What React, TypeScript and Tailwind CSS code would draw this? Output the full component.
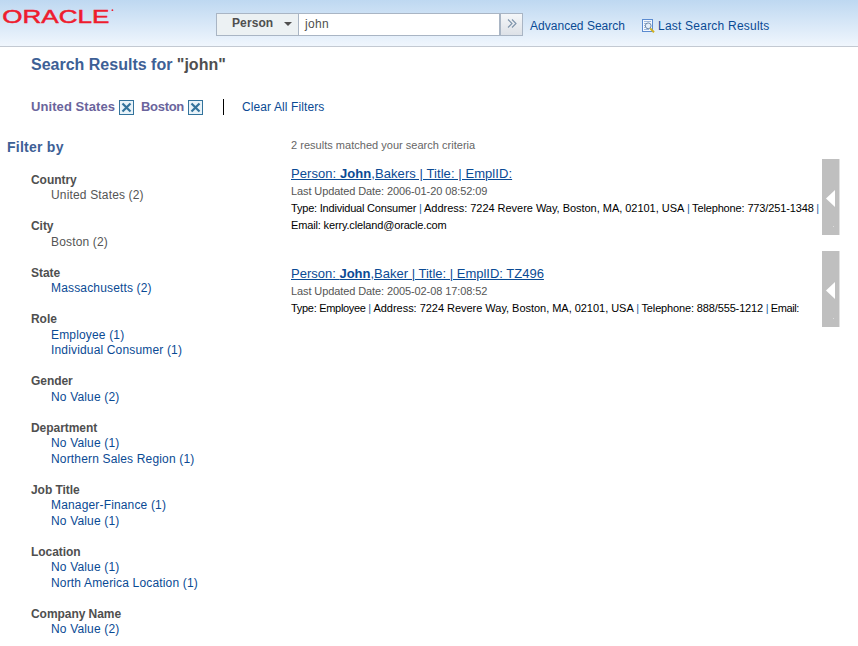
type FilterGroup = {
  name: string;
  values: string[];
  applied?: boolean;
};

type Result = {
  rest: string;
  updated: string;
  offset: string;
  titleTracking: string;
  lines: { text: string; className: string }[][];
};

const filterGroups: FilterGroup[] = [
  { name: 'Country', values: ['United States (2)'], applied: true },
  { name: 'City', values: ['Boston (2)'], applied: true },
  { name: 'State', values: ['Massachusetts (2)'] },
  { name: 'Role', values: ['Employee (1)', 'Individual Consumer (1)'] },
  { name: 'Gender', values: ['No Value (2)'] },
  { name: 'Department', values: ['No Value (1)', 'Northern Sales Region (1)'] },
  { name: 'Job Title', values: ['Manager-Finance (1)', 'No Value (1)'] },
  { name: 'Location', values: ['No Value (1)', 'North America Location (1)'] },
  { name: 'Company Name', values: ['No Value (2)'] },
];

const results: Result[] = [
  {
    rest: ',Bakers | Title: | EmplID:',
    updated: '2006-01-20 08:52:09',
    offset: 'pt-[6px]',
    titleTracking: 'tracking-[0.07px]',
    lines: [
      [
        { text: 'Type: Individual Consumer', className: 'tracking-[-0.2px]' },
        { text: 'Address: 7224 Revere Way, Boston, MA, 02101, USA', className: 'tracking-[-0.03px]' },
        { text: 'Telephone: 773/251-1348', className: 'tracking-[-0.14px]' },
        { text: '', className: '' },
      ],
      [{ text: 'Email: kerry.cleland@oracle.com', className: 'tracking-[-0.15px]' }],
    ],
  },
  {
    rest: ',Baker | Title: | EmplID: TZ496',
    updated: '2005-02-08 17:08:52',
    offset: 'pt-[14px]',
    titleTracking: '',
    lines: [
      [
        { text: 'Type: Employee', className: 'tracking-[-0.3px]' },
        { text: 'Address: 7224 Revere Way, Boston, MA, 02101, USA', className: 'tracking-[-0.03px]' },
        { text: 'Telephone: 888/555-1212', className: 'tracking-[-0.14px]' },
        { text: 'Email:', className: 'tracking-[-0.4px]' },
      ],
    ],
  },
];

function OracleLogo() {
  return (
    <svg width="116" height="20" viewBox="0 0 116 20" className="mt-[6px] ml-[2px] shrink-0" fill="#ee1c2e">
      <text x="0.3" y="16.7" fontSize="19.2" textLength="107" lengthAdjust="spacingAndGlyphs" stroke="#ee1c2e" strokeWidth="0.5">
        ORACLE
      </text>
      <circle cx="110.4" cy="4.2" r="0.9" />
    </svg>
  );
}

function LastSearchIcon() {
  return (
    <svg width="13" height="14" viewBox="0 0 13 14" className="shrink-0">
      <rect x="0.5" y="0.5" width="10" height="12" fill="#f4f8fd" stroke="#5b8bd0" />
      <path d="M2 2.5h7M2 4.5h2M2 6.5h1M2 8.5h1M2 10.5h5" stroke="#9fb9dc" />
      <circle cx="6.2" cy="6.8" r="2.9" fill="#e3eefa" stroke="#6a86a8" />
      <path d="M8.2 9.4l3.8 3.8" stroke="#d0b021" strokeWidth="2" />
    </svg>
  );
}

function RemoveIcon() {
  return (
    <svg width="15" height="15" viewBox="0 0 15 15" className="shrink-0">
      <rect x="0.5" y="0.5" width="14" height="14" fill="#e9f3f9" stroke="#33739c" />
      <path d="M3.5 3.5l8 8M11.5 3.5l-8 8" stroke="#33739c" strokeWidth="2.2" />
    </svg>
  );
}

function Header() {
  return (
    <header className="flex h-[47px] items-start border-b border-[#c3c9d2] bg-linear-to-b from-[#bed8f1] to-[#f0f6fd]">
      <div className="w-[216px]">
        <OracleLogo />
      </div>
      <div className="mt-[13px] flex h-[23px] w-[307px] border border-[#a9b5c4] bg-white">
        <button className="flex w-[82px] items-start border-r border-[#a9b5c4] bg-[#ecf1f3] pl-[15px] text-[12px] leading-[19px] font-bold text-[#4f4f4f]">
          <span className="w-[52px] text-left tracking-[0.1px]">Person</span>
          <svg width="8" height="4" viewBox="0 0 8 4" className="mt-[8px]">
            <path d="M0 0h8L4 4z" fill="#4f4f4f" />
          </svg>
        </button>
        <div className="flex-1 pl-[6px] text-[12px] leading-[20px] tracking-[0.3px] text-[#4f4f4f]">john</div>
        <button className="flex w-[23px] items-center justify-center border-l-2 border-[#a9b5c4] bg-linear-to-b from-[#f5f7f9] to-[#dde1e7]">
          <svg width="10" height="9" viewBox="0 0 10 9" fill="none" stroke="#7d93aa" strokeWidth="1.1" className="mb-[2px]">
            <path d="M1 0.5l4 4-4 4M5 0.5l4 4-4 4" />
          </svg>
        </button>
      </div>
      <nav className="mt-[18px] flex h-[16px] items-center text-[12px] text-[#0a4a94]">
        <a className="ml-[7px] w-[112px] tracking-[0.02px]">Advanced Search</a>
        <LastSearchIcon />
        <a className="ml-[3px] tracking-[0.22px]">Last Search Results</a>
      </nav>
    </header>
  );
}

function FilterPanel() {
  return (
    <aside className="w-[291px] shrink-0 pl-[7px]">
      <h2 className="text-[14px] leading-[18px] font-bold tracking-[0.25px] text-[#3d6096]">Filter by</h2>
      <div className="mt-[16.5px] ml-[24px] flex flex-col gap-[15.5px] text-[12px] leading-[15.5px]">
        {filterGroups.map((group) => (
          <section key={group.name}>
            <h3 className="font-bold tracking-[-0.05px] text-[#4f4f4f]">{group.name}</h3>
            {group.values.map((value) => (
              <div
                key={value}
                className={`pl-[20px] tracking-[0.16px] ${group.applied ? 'text-[#555555]' : 'text-[#0a4a94]'}`}
              >
                {value}
              </div>
            ))}
          </section>
        ))}
      </div>
    </aside>
  );
}

function ResultLine({ segments }: { segments: Result['lines'][number] }) {
  return (
    <p className="text-[11px] leading-[17px] whitespace-nowrap text-black">
      {segments.map((segment, i) => (
        <span key={i}>
          {i > 0 && <span className="tracking-[-0.4px] text-[#1f5f9f]"> | </span>}
          <span className={segment.className}>{segment.text}</span>
        </span>
      ))}
    </p>
  );
}

function CollapseHandle() {
  return (
    <div className="h-[76px] w-[18px] shrink-0 border-r border-[#e2e2e2] bg-[#bfbfbf]">
      <svg width="17" height="76" viewBox="0 0 17 76">
        <path d="M13 31v17L4 39.5z" fill="#ffffff" />
        <rect x="11" y="67" width="1" height="1" fill="#dddddd" />
      </svg>
    </div>
  );
}

function ResultList() {
  return (
    <main className="w-[549px]">
      <p className="text-[11px] leading-[14px] tracking-[0.02px] text-[#666666]">2 results matched your search criteria</p>
      <div className="mt-[7px] flex flex-col gap-[16px]">
        {results.map((result) => (
          <article key={result.updated} className="flex h-[76px]">
            <div className={`w-[531px] shrink-0 ${result.offset}`}>
              <a
                className={`block text-[13px] leading-[17px] whitespace-nowrap text-[#0a4a94] underline ${result.titleTracking}`}
              >
                Person: <b>John</b>
                {result.rest}
              </a>
              <p className="mt-px text-[11px] leading-[17px] tracking-[-0.1px] text-[#555555]">
                Last Updated Date: {result.updated}
              </p>
              {result.lines.map((segments) => (
                <ResultLine key={segments[0].text} segments={segments} />
              ))}
            </div>
            <CollapseHandle />
          </article>
        ))}
      </div>
    </main>
  );
}

export default function App() {
  return (
    <div className="h-[646px] w-[858px] overflow-hidden bg-white font-['Liberation_Sans',Arial,sans-serif]">
      <Header />
      <h1 className="mt-[8px] ml-[31px] text-[16px] leading-[20px] font-bold text-[#3d6096]">
        Search Results for <span className="text-[#4f4f4f]">"john"</span>
      </h1>
      <div className="mt-[24px] ml-[31px] flex h-[16px] items-center text-[13px] leading-[16px] font-bold text-[#6a649c]">
        <span className="w-[88px] tracking-[0.08px]">United States</span>
        <RemoveIcon />
        <span className="ml-[7px] w-[47px] tracking-[-0.3px]">Boston</span>
        <RemoveIcon />
        <span className="ml-[20px] h-[16px] w-px bg-black" />
        <a className="ml-[18px] text-[12px] font-normal tracking-[0.1px] text-[#0a4a94]">Clear All Filters</a>
      </div>
      <div className="mt-[23px] flex">
        <FilterPanel />
        <ResultList />
      </div>
    </div>
  );
}
